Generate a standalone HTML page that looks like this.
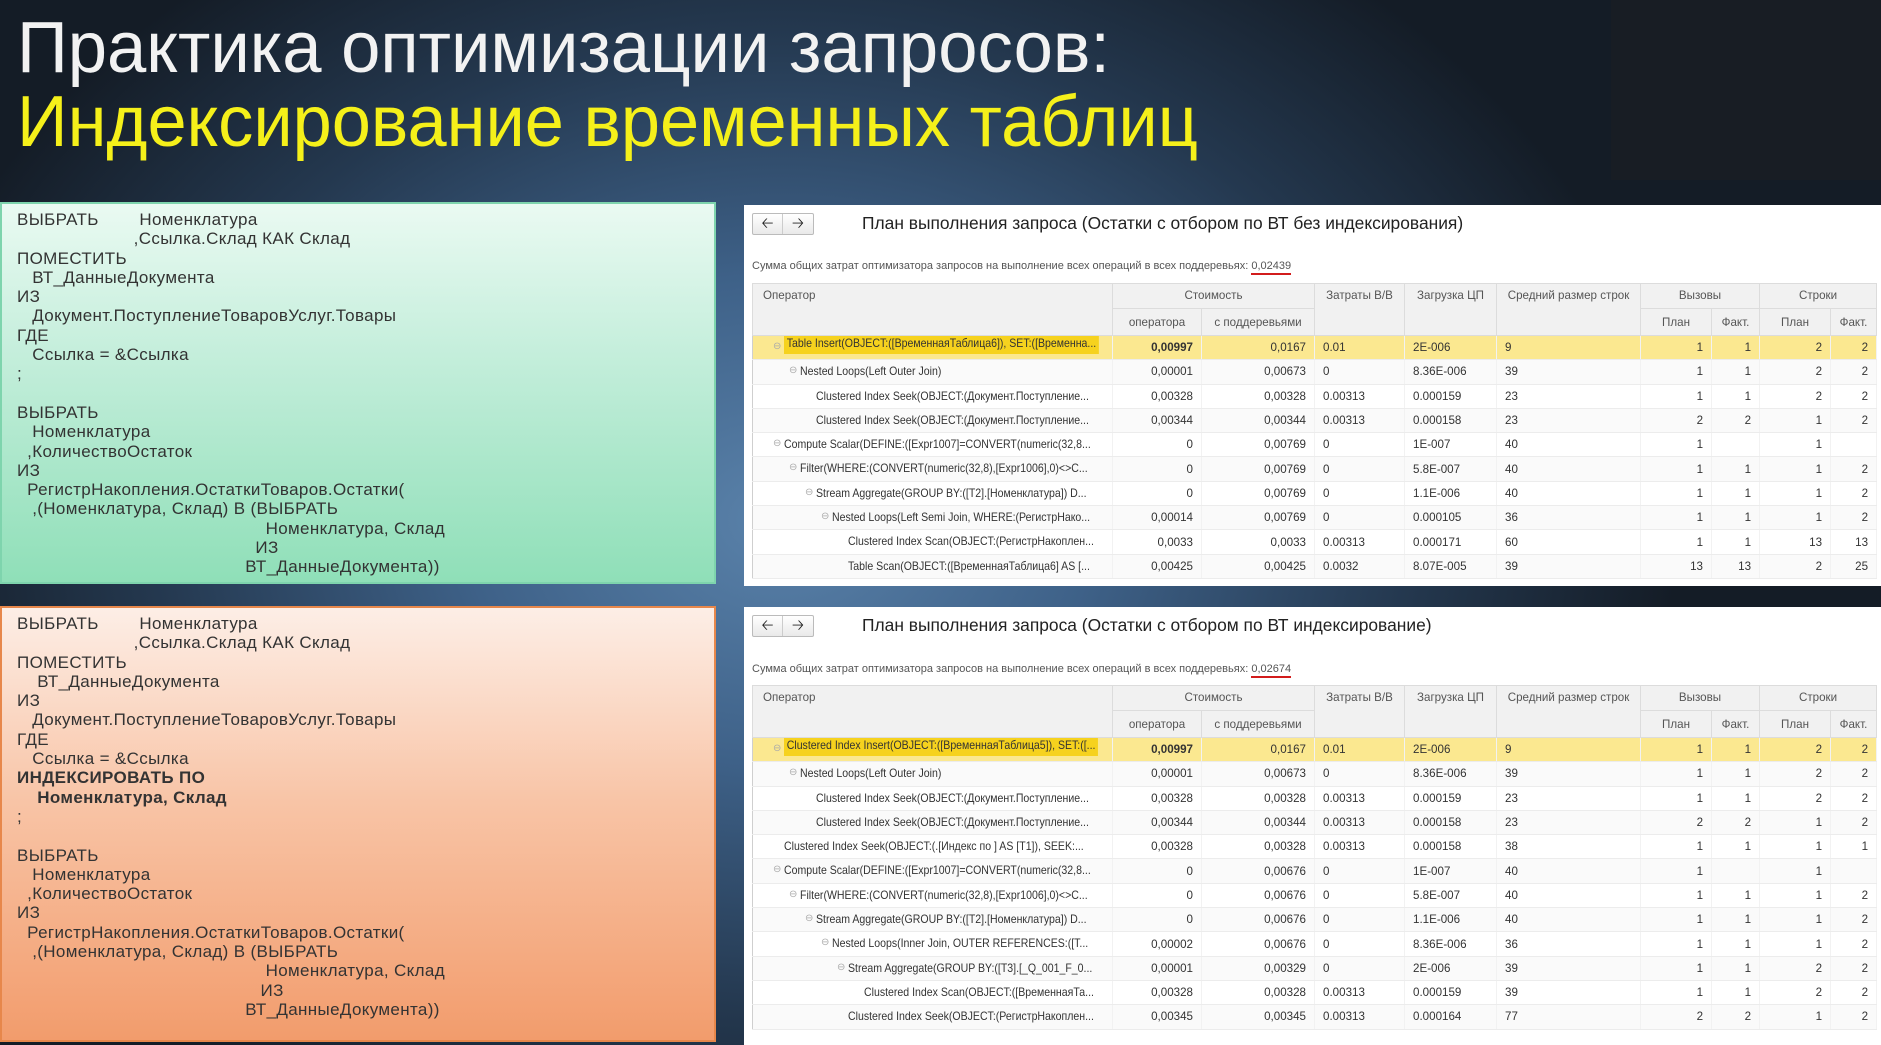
<!DOCTYPE html>
<html><head><meta charset="utf-8">
<style>
*{margin:0;padding:0;box-sizing:border-box}
body{width:1881px;height:1045px;overflow:hidden;position:relative;font-family:"Liberation Sans","DejaVu Sans",sans-serif;
background:radial-gradient(ellipse 900px 700px at 780px 520px,#5a82aa 0%,#3e6188 35%,#24384f 70%,#141c26 100%);}
.sq{position:absolute;left:1611px;top:0;width:270px;height:180px;background:#181d24}
.code{position:absolute;left:0;width:716px;padding:6px 0 0 15px;font-size:17px;line-height:19.3px;color:#333;white-space:pre;font-family:"Liberation Sans",sans-serif;letter-spacing:0.35px}
.g{top:202px;height:382px;background:linear-gradient(#eafaf2,#c4eedb 40%,#8fdfb8);border:2px solid #7ed4ad}
.o{top:606px;height:436px;background:linear-gradient(#fdeee6,#f8c4a6 45%,#f29c6c);border:2px solid #e7874b}
.panel{position:absolute;left:744px;width:1137px;background:#fff}
.nav{position:absolute;left:8px;width:62px;height:22px;border:1px solid #bbb;border-radius:2px;background:linear-gradient(#fff,#e9e9e9);font-size:15px;color:#222;line-height:20px}
.nav span{display:inline-block;width:30px;text-align:center}
.nav span:first-child{border-right:1px solid #ccc}
.ttl{position:absolute;left:118px;font-size:17.4px;color:#222;font-family:"Liberation Sans Narrow","Liberation Sans",sans-serif}
.sum{position:absolute;left:8px;font-size:11px;color:#555;font-family:"Liberation Sans Narrow","Liberation Sans",sans-serif}
.sum u{text-decoration:none;border-bottom:2px solid #d21c1c;padding-bottom:1px}
table{position:absolute;left:8px;border-collapse:collapse;table-layout:fixed;font-family:"Liberation Sans Narrow","Liberation Sans",sans-serif;font-size:11.6px;color:#333;border:1px solid #cfcfcf}
th{background:#f1f1f1;font-weight:normal;color:#555;border:1px solid #dcdcdc;vertical-align:top;padding-top:5px;height:25px}
th.l{text-align:left;padding-left:10px}
tr.s th{height:27px;vertical-align:middle;padding-top:0}
td{height:24.3px;border-bottom:1px solid #ececec;border-right:1px solid #f2f2f2;white-space:nowrap;overflow:hidden;padding:0 8px}
td.r{text-align:right}
td.op{padding:0;position:relative}
td.op span{position:absolute;top:5px;transform:scaleX(0.91);transform-origin:0 0;white-space:nowrap}
td.op i{position:absolute;top:5px;font-style:normal;color:#aaa;font-size:10px}
tr.h td.op b{font-weight:normal;background:#f6d21e;padding:4px 3px}
tr:nth-child(even) td{background:#fafafa}
tr.h td{background:#fbe890!important}
</style></head><body>
<div class="sq"></div>
<svg style="position:absolute;left:0;top:0" width="1300" height="170">
<text x="17" y="72" font-family="Liberation Sans,sans-serif" font-size="72" fill="#f2f2f2" textLength="1093" lengthAdjust="spacingAndGlyphs">Практика оптимизации запросов:</text>
<text x="17" y="146" font-family="Liberation Sans,sans-serif" font-size="72" fill="#f5f01a" textLength="1181" lengthAdjust="spacingAndGlyphs">Индексирование временных таблиц</text>
</svg>

<div class="code g">ВЫБРАТЬ        Номенклатура
                       ,Ссылка.Склад КАК Склад
ПОМЕСТИТЬ
   ВТ_ДанныеДокумента
ИЗ
   Документ.ПоступлениеТоваровУслуг.Товары
ГДЕ
   Ссылка = &amp;Ссылка
;

ВЫБРАТЬ
   Номенклатура
  ,КоличествоОстаток
ИЗ
  РегистрНакопления.ОстаткиТоваров.Остатки(
   ,(Номенклатура, Склад) В (ВЫБРАТЬ
                                                 Номенклатура, Склад
                                               ИЗ
                                             ВТ_ДанныеДокумента))</div>

<div class="code o">ВЫБРАТЬ        Номенклатура
                       ,Ссылка.Склад КАК Склад
ПОМЕСТИТЬ
    ВТ_ДанныеДокумента
ИЗ
   Документ.ПоступлениеТоваровУслуг.Товары
ГДЕ
   Ссылка = &amp;Ссылка
<b>ИНДЕКСИРОВАТЬ ПО
    Номенклатура, Склад</b>
;

ВЫБРАТЬ
   Номенклатура
  ,КоличествоОстаток
ИЗ
  РегистрНакопления.ОстаткиТоваров.Остатки(
   ,(Номенклатура, Склад) В (ВЫБРАТЬ
                                                 Номенклатура, Склад
                                                ИЗ
                                             ВТ_ДанныеДокумента))</div>

<div class="panel" style="top:205px;height:381px">
<div class="nav" style="top:8px"><span>&#129120;</span><span>&#129122;</span></div>
<div class="ttl" style="top:8px">План выполнения запроса (Остатки с отбором по ВТ без индексирования)</div>
<div class="sum" style="top:55px">Сумма общих затрат оптимизатора запросов на выполнение всех операций в всех поддеревьях: <u>0,02439</u></div>
<table style="top:78px;width:1124px">
<colgroup><col style="width:360px"><col style="width:89px"><col style="width:113px"><col style="width:90px"><col style="width:92px"><col style="width:144px"><col style="width:71px"><col style="width:48px"><col style="width:71px"><col style="width:46px"></colgroup>
<tr><th class="l" rowspan="2">Оператор</th><th colspan="2">Стоимость</th><th rowspan="2">Затраты В/В</th><th rowspan="2">Загрузка ЦП</th><th rowspan="2">Средний размер строк</th><th colspan="2">Вызовы</th><th colspan="2">Строки</th></tr>
<tr class="s"><th>оператора</th><th>с поддеревьями</th><th>План</th><th>Факт.</th><th>План</th><th>Факт.</th></tr>
<tr class="h"><td class="op"><i style="left:20px">⊖</i><span style="left:31px;top:1px"><b>Table Insert(OBJECT:([ВременнаяТаблица6]), SET:([Временна...</b></span></td><td class="r"><b>0,00997</b></td><td class="r">0,0167</td><td>0.01</td><td>2E-006</td><td>9</td><td class="r">1</td><td class="r">1</td><td class="r">2</td><td class="r">2</td></tr>
<tr><td class="op"><i style="left:36px">⊖</i><span style="left:47px">Nested Loops(Left Outer Join)</span></td><td class="r">0,00001</td><td class="r">0,00673</td><td>0</td><td>8.36E-006</td><td>39</td><td class="r">1</td><td class="r">1</td><td class="r">2</td><td class="r">2</td></tr>
<tr><td class="op"><span style="left:63px">Clustered Index Seek(OBJECT:(Документ.Поступление...</span></td><td class="r">0,00328</td><td class="r">0,00328</td><td>0.00313</td><td>0.000159</td><td>23</td><td class="r">1</td><td class="r">1</td><td class="r">2</td><td class="r">2</td></tr>
<tr><td class="op"><span style="left:63px">Clustered Index Seek(OBJECT:(Документ.Поступление...</span></td><td class="r">0,00344</td><td class="r">0,00344</td><td>0.00313</td><td>0.000158</td><td>23</td><td class="r">2</td><td class="r">2</td><td class="r">1</td><td class="r">2</td></tr>
<tr><td class="op"><i style="left:20px">⊖</i><span style="left:31px">Compute Scalar(DEFINE:([Expr1007]=CONVERT(numeric(32,8...</span></td><td class="r">0</td><td class="r">0,00769</td><td>0</td><td>1E-007</td><td>40</td><td class="r">1</td><td class="r"></td><td class="r">1</td><td class="r"></td></tr>
<tr><td class="op"><i style="left:36px">⊖</i><span style="left:47px">Filter(WHERE:(CONVERT(numeric(32,8),[Expr1006],0)&lt;&gt;C...</span></td><td class="r">0</td><td class="r">0,00769</td><td>0</td><td>5.8E-007</td><td>40</td><td class="r">1</td><td class="r">1</td><td class="r">1</td><td class="r">2</td></tr>
<tr><td class="op"><i style="left:52px">⊖</i><span style="left:63px">Stream Aggregate(GROUP BY:([T2].[Номенклатура]) D...</span></td><td class="r">0</td><td class="r">0,00769</td><td>0</td><td>1.1E-006</td><td>40</td><td class="r">1</td><td class="r">1</td><td class="r">1</td><td class="r">2</td></tr>
<tr><td class="op"><i style="left:68px">⊖</i><span style="left:79px">Nested Loops(Left Semi Join, WHERE:(РегистрНако...</span></td><td class="r">0,00014</td><td class="r">0,00769</td><td>0</td><td>0.000105</td><td>36</td><td class="r">1</td><td class="r">1</td><td class="r">1</td><td class="r">2</td></tr>
<tr><td class="op"><span style="left:95px">Clustered Index Scan(OBJECT:(РегистрНакоплен...</span></td><td class="r">0,0033</td><td class="r">0,0033</td><td>0.00313</td><td>0.000171</td><td>60</td><td class="r">1</td><td class="r">1</td><td class="r">13</td><td class="r">13</td></tr>
<tr><td class="op"><span style="left:95px">Table Scan(OBJECT:([ВременнаяТаблица6] AS [...</span></td><td class="r">0,00425</td><td class="r">0,00425</td><td>0.0032</td><td>8.07E-005</td><td>39</td><td class="r">13</td><td class="r">13</td><td class="r">2</td><td class="r">25</td></tr>
</table>
</div>

<div class="panel" style="top:607px;height:438px">
<div class="nav" style="top:8px"><span>&#129120;</span><span>&#129122;</span></div>
<div class="ttl" style="top:8px">План выполнения запроса (Остатки с отбором по ВТ индексирование)</div>
<div class="sum" style="top:56px">Сумма общих затрат оптимизатора запросов на выполнение всех операций в всех поддеревьях: <u>0,02674</u></div>
<table style="top:78px;width:1124px">
<colgroup><col style="width:360px"><col style="width:89px"><col style="width:113px"><col style="width:90px"><col style="width:92px"><col style="width:144px"><col style="width:71px"><col style="width:48px"><col style="width:71px"><col style="width:46px"></colgroup>
<tr><th class="l" rowspan="2">Оператор</th><th colspan="2">Стоимость</th><th rowspan="2">Затраты В/В</th><th rowspan="2">Загрузка ЦП</th><th rowspan="2">Средний размер строк</th><th colspan="2">Вызовы</th><th colspan="2">Строки</th></tr>
<tr class="s"><th>оператора</th><th>с поддеревьями</th><th>План</th><th>Факт.</th><th>План</th><th>Факт.</th></tr>
<tr class="h"><td class="op"><i style="left:20px">⊖</i><span style="left:31px;top:1px"><b>Clustered Index Insert(OBJECT:([ВременнаяТаблица5]), SET:([...</b></span></td><td class="r"><b>0,00997</b></td><td class="r">0,0167</td><td>0.01</td><td>2E-006</td><td>9</td><td class="r">1</td><td class="r">1</td><td class="r">2</td><td class="r">2</td></tr>
<tr><td class="op"><i style="left:36px">⊖</i><span style="left:47px">Nested Loops(Left Outer Join)</span></td><td class="r">0,00001</td><td class="r">0,00673</td><td>0</td><td>8.36E-006</td><td>39</td><td class="r">1</td><td class="r">1</td><td class="r">2</td><td class="r">2</td></tr>
<tr><td class="op"><span style="left:63px">Clustered Index Seek(OBJECT:(Документ.Поступление...</span></td><td class="r">0,00328</td><td class="r">0,00328</td><td>0.00313</td><td>0.000159</td><td>23</td><td class="r">1</td><td class="r">1</td><td class="r">2</td><td class="r">2</td></tr>
<tr><td class="op"><span style="left:63px">Clustered Index Seek(OBJECT:(Документ.Поступление...</span></td><td class="r">0,00344</td><td class="r">0,00344</td><td>0.00313</td><td>0.000158</td><td>23</td><td class="r">2</td><td class="r">2</td><td class="r">1</td><td class="r">2</td></tr>
<tr><td class="op"><span style="left:31px">Clustered Index Seek(OBJECT:(.[Индекс по ] AS [T1]), SEEK:...</span></td><td class="r">0,00328</td><td class="r">0,00328</td><td>0.00313</td><td>0.000158</td><td>38</td><td class="r">1</td><td class="r">1</td><td class="r">1</td><td class="r">1</td></tr>
<tr><td class="op"><i style="left:20px">⊖</i><span style="left:31px">Compute Scalar(DEFINE:([Expr1007]=CONVERT(numeric(32,8...</span></td><td class="r">0</td><td class="r">0,00676</td><td>0</td><td>1E-007</td><td>40</td><td class="r">1</td><td class="r"></td><td class="r">1</td><td class="r"></td></tr>
<tr><td class="op"><i style="left:36px">⊖</i><span style="left:47px">Filter(WHERE:(CONVERT(numeric(32,8),[Expr1006],0)&lt;&gt;C...</span></td><td class="r">0</td><td class="r">0,00676</td><td>0</td><td>5.8E-007</td><td>40</td><td class="r">1</td><td class="r">1</td><td class="r">1</td><td class="r">2</td></tr>
<tr><td class="op"><i style="left:52px">⊖</i><span style="left:63px">Stream Aggregate(GROUP BY:([T2].[Номенклатура]) D...</span></td><td class="r">0</td><td class="r">0,00676</td><td>0</td><td>1.1E-006</td><td>40</td><td class="r">1</td><td class="r">1</td><td class="r">1</td><td class="r">2</td></tr>
<tr><td class="op"><i style="left:68px">⊖</i><span style="left:79px">Nested Loops(Inner Join, OUTER REFERENCES:([T...</span></td><td class="r">0,00002</td><td class="r">0,00676</td><td>0</td><td>8.36E-006</td><td>36</td><td class="r">1</td><td class="r">1</td><td class="r">1</td><td class="r">2</td></tr>
<tr><td class="op"><i style="left:84px">⊖</i><span style="left:95px">Stream Aggregate(GROUP BY:([T3].[_Q_001_F_0...</span></td><td class="r">0,00001</td><td class="r">0,00329</td><td>0</td><td>2E-006</td><td>39</td><td class="r">1</td><td class="r">1</td><td class="r">2</td><td class="r">2</td></tr>
<tr><td class="op"><span style="left:111px">Clustered Index Scan(OBJECT:([ВременнаяТа...</span></td><td class="r">0,00328</td><td class="r">0,00328</td><td>0.00313</td><td>0.000159</td><td>39</td><td class="r">1</td><td class="r">1</td><td class="r">2</td><td class="r">2</td></tr>
<tr><td class="op"><span style="left:95px">Clustered Index Seek(OBJECT:(РегистрНакоплен...</span></td><td class="r">0,00345</td><td class="r">0,00345</td><td>0.00313</td><td>0.000164</td><td>77</td><td class="r">2</td><td class="r">2</td><td class="r">1</td><td class="r">2</td></tr>
</table>
</div>
</body></html>
